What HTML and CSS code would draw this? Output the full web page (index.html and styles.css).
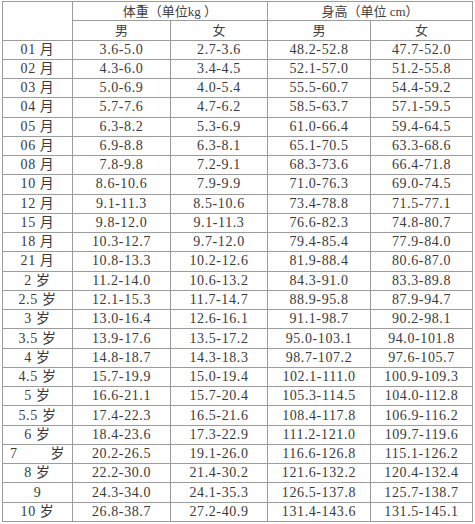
FILE: index.html
```html
<!DOCTYPE html>
<html lang="zh-CN">
<head>
<meta charset="utf-8">
<title>儿童身高体重标准表</title>
<link rel="stylesheet" href="styles.css">
</head>
<body>
<div class="sheet">
  <div class="c blank span2"></div>
  <div class="c head span-w">体重（单位kg ）</div>
  <div class="c head span-w">身高（单位 cm）</div>
  <div class="c head">男</div>
  <div class="c head">女</div>
  <div class="c head">男</div>
  <div class="c head">女</div>

  <div class="c">01 月</div><div class="c">3.6-5.0</div><div class="c">2.7-3.6</div><div class="c">48.2-52.8</div><div class="c">47.7-52.0</div>
  <div class="c">02 月</div><div class="c">4.3-6.0</div><div class="c">3.4-4.5</div><div class="c">52.1-57.0</div><div class="c">51.2-55.8</div>
  <div class="c">03 月</div><div class="c">5.0-6.9</div><div class="c">4.0-5.4</div><div class="c">55.5-60.7</div><div class="c">54.4-59.2</div>
  <div class="c">04 月</div><div class="c">5.7-7.6</div><div class="c">4.7-6.2</div><div class="c">58.5-63.7</div><div class="c">57.1-59.5</div>
  <div class="c">05 月</div><div class="c">6.3-8.2</div><div class="c">5.3-6.9</div><div class="c">61.0-66.4</div><div class="c">59.4-64.5</div>
  <div class="c">06 月</div><div class="c">6.9-8.8</div><div class="c">6.3-8.1</div><div class="c">65.1-70.5</div><div class="c">63.3-68.6</div>
  <div class="c">08 月</div><div class="c">7.8-9.8</div><div class="c">7.2-9.1</div><div class="c">68.3-73.6</div><div class="c">66.4-71.8</div>
  <div class="c">10 月</div><div class="c">8.6-10.6</div><div class="c">7.9-9.9</div><div class="c">71.0-76.3</div><div class="c">69.0-74.5</div>
  <div class="c">12 月</div><div class="c">9.1-11.3</div><div class="c">8.5-10.6</div><div class="c">73.4-78.8</div><div class="c">71.5-77.1</div>
  <div class="c">15 月</div><div class="c">9.8-12.0</div><div class="c">9.1-11.3</div><div class="c">76.6-82.3</div><div class="c">74.8-80.7</div>
  <div class="c">18 月</div><div class="c">10.3-12.7</div><div class="c">9.7-12.0</div><div class="c">79.4-85.4</div><div class="c">77.9-84.0</div>
  <div class="c">21 月</div><div class="c">10.8-13.3</div><div class="c">10.2-12.6</div><div class="c">81.9-88.4</div><div class="c">80.6-87.0</div>
  <div class="c">2 岁</div><div class="c">11.2-14.0</div><div class="c">10.6-13.2</div><div class="c">84.3-91.0</div><div class="c">83.3-89.8</div>
  <div class="c">2.5 岁</div><div class="c">12.1-15.3</div><div class="c">11.7-14.7</div><div class="c">88.9-95.8</div><div class="c">87.9-94.7</div>
  <div class="c">3 岁</div><div class="c">13.0-16.4</div><div class="c">12.6-16.1</div><div class="c">91.1-98.7</div><div class="c">90.2-98.1</div>
  <div class="c">3.5 岁</div><div class="c">13.9-17.6</div><div class="c">13.5-17.2</div><div class="c">95.0-103.1</div><div class="c">94.0-101.8</div>
  <div class="c">4 岁</div><div class="c">14.8-18.7</div><div class="c">14.3-18.3</div><div class="c">98.7-107.2</div><div class="c">97.6-105.7</div>
  <div class="c">4.5 岁</div><div class="c">15.7-19.9</div><div class="c">15.0-19.4</div><div class="c">102.1-111.0</div><div class="c">100.9-109.3</div>
  <div class="c">5 岁</div><div class="c">16.6-21.1</div><div class="c">15.7-20.4</div><div class="c">105.3-114.5</div><div class="c">104.0-112.8</div>
  <div class="c">5.5 岁</div><div class="c">17.4-22.3</div><div class="c">16.5-21.6</div><div class="c">108.4-117.8</div><div class="c">106.9-116.2</div>
  <div class="c">6 岁</div><div class="c">18.4-23.6</div><div class="c">17.3-22.9</div><div class="c">111.2-121.0</div><div class="c">109.7-119.6</div>
  <div class="c">7        岁</div><div class="c">20.2-26.5</div><div class="c">19.1-26.0</div><div class="c">116.6-126.8</div><div class="c">115.1-126.2</div>
  <div class="c">8 岁</div><div class="c">22.2-30.0</div><div class="c">21.4-30.2</div><div class="c">121.6-132.2</div><div class="c">120.4-132.4</div>
  <div class="c">9</div><div class="c">24.3-34.0</div><div class="c">24.1-35.3</div><div class="c">126.5-137.8</div><div class="c">125.7-138.7</div>
  <div class="c">10 岁</div><div class="c">26.8-38.7</div><div class="c">27.2-40.9</div><div class="c">131.4-143.6</div><div class="c">131.5-145.1</div>
</div>
</body>
</html>
```

FILE: styles.css
```css
html, body {
  margin: 0;
  padding: 0;
  background: #ffffff;
}

.sheet {
  margin: 1px 0 0 2px;
  width: 471px;
  height: 521px;
  box-sizing: border-box;
  padding: 1px;
  gap: 1px;
  background: #9c9c9c;
  display: grid;
  grid-template-columns: 69fr 97fr 96fr 102fr 101fr;
  grid-template-rows: repeat(27, 1fr);
  font-family: "Liberation Serif", "Noto Sans CJK SC", serif;
  font-size: 14px;
  letter-spacing: 0.6px;
  color: #3a3a3a;
}

.c {
  background: #ffffff;
  display: flex;
  align-items: center;
  justify-content: center;
  white-space: pre;
  line-height: 1;
  min-height: 0;
  overflow: hidden;
}

.head {
  font-size: 13px;
  letter-spacing: 0;
  color: #404040;
}

.blank.span2 {
  grid-row: span 2;
}

.span-w {
  grid-column: span 2;
}
```
